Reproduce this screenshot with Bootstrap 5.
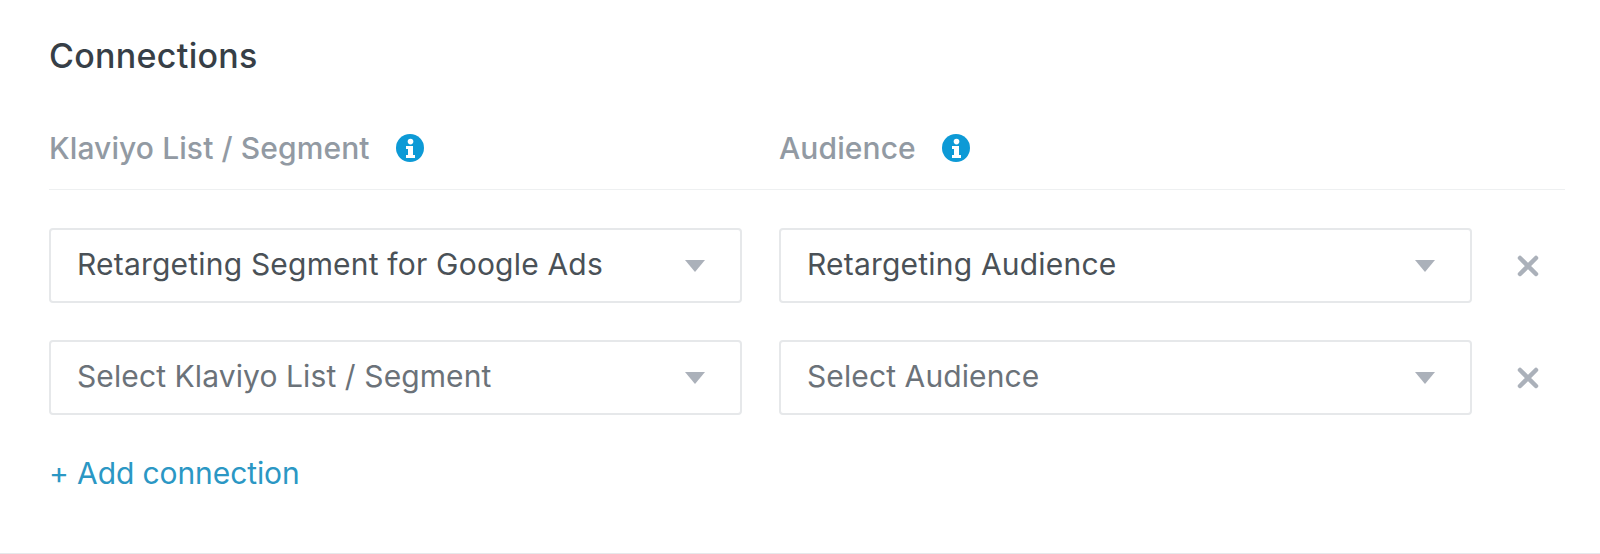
<!DOCTYPE html>
<html>
<head>
    <title>Connections</title>
    <link href="https://cdn.jsdelivr.net/npm/bootstrap@5.3.0/dist/css/bootstrap.min.css" rel="stylesheet">
    <style>
        body {
            font-family: "Inter", "Liberation Sans", sans-serif;
            background: #fff;
            color: #373f47;
        }
        .page {
            height: 554px;
            padding: 36px 35px 0 49px;
            border-bottom: 1px solid #e6e8ea;
            overflow: hidden;
        }
        .title {
            font-size: 34px;
            line-height: 40px;
            font-weight: 500;
            letter-spacing: .3px;
            color: #373f47;
            margin: 0 0 51px;
        }
        .col-left { width: 693px; }
        .col-right { width: 693px; }
        .gutter { gap: 37px; }
        .head-row { height: 40px; }
        .head-label {
            font-size: 30px;
            line-height: 40px;
            font-weight: 500;
            letter-spacing: .1px;
            padding-top: 2px;
            color: #929aa3;
        }
        .info-icon {
            margin-left: 26px;
            margin-top: 2px;
        }
        .head-rule {
            height: 1px;
            background: #eef0f1;
            margin: 22px 0 38px;
        }
        .fake-select {
            height: 75px;
            padding: 0 35px 0 26px;
            border: 2px solid #e6e8ea;
            border-radius: 4px;
            font-size: 30px;
            letter-spacing: .2px;
            color: #4a5157;
        }
        .fake-select.empty { color: #6b7279; letter-spacing: .1px; }
        .fake-select > span:first-child { padding-bottom: 3px; }
        .conn-row { margin-bottom: 37px; }
        .caret-down {
            width: 0;
            height: 0;
            border-left: 10px solid transparent;
            border-right: 10px solid transparent;
            border-top: 12px solid #abb1ba;
        }
        .remove-btn {
            width: 22px;
            height: 22px;
            margin-left: 45px;
        }
        .add-link {
            font-size: 30px;
            line-height: 40px;
            letter-spacing: -.1px;
            color: #2b97c4;
            text-decoration: none;
            display: inline-block;
            margin-top: 1px;
        }
    </style>
</head>
<body>
    <div class="page">
        <h2 class="title">Connections</h2>

        <div class="d-flex gutter head-row">
            <div class="col-left d-flex align-items-center">
                <span class="head-label">Klaviyo List / Segment</span>
                <svg class="info-icon" width="28" height="28" viewBox="0 0 28 28"><circle cx="14" cy="14" r="14" fill="#0d9ad6"/><circle cx="14.5" cy="7.6" r="2.8" fill="#fff"/><path d="M10 12h7v9h2v3h-9v-3h2v-6h-2z" fill="#fff"/></svg>
            </div>
            <div class="col-right d-flex align-items-center">
                <span class="head-label">Audience</span>
                <svg class="info-icon" width="28" height="28" viewBox="0 0 28 28"><circle cx="14" cy="14" r="14" fill="#0d9ad6"/><circle cx="14.5" cy="7.6" r="2.8" fill="#fff"/><path d="M10 12h7v9h2v3h-9v-3h2v-6h-2z" fill="#fff"/></svg>
            </div>
        </div>
        <div class="head-rule"></div>

        <div class="d-flex align-items-center gutter conn-row">
            <div class="col-left fake-select d-flex align-items-center justify-content-between">
                <span>Retargeting Segment for Google Ads</span>
                <span class="caret-down"></span>
            </div>
            <div class="d-flex align-items-center">
                <div class="col-right fake-select d-flex align-items-center justify-content-between">
                    <span>Retargeting Audience</span>
                    <span class="caret-down"></span>
                </div>
                <svg class="remove-btn" viewBox="0 0 22 22"><path d="M3 3l16 16M19 3L3 19" stroke="#abb1ba" stroke-width="4.5" stroke-linecap="round"/></svg>
            </div>
        </div>

        <div class="d-flex align-items-center gutter conn-row">
            <div class="col-left fake-select empty d-flex align-items-center justify-content-between">
                <span>Select Klaviyo List / Segment</span>
                <span class="caret-down"></span>
            </div>
            <div class="d-flex align-items-center">
                <div class="col-right fake-select empty d-flex align-items-center justify-content-between">
                    <span>Select Audience</span>
                    <span class="caret-down"></span>
                </div>
                <svg class="remove-btn" viewBox="0 0 22 22"><path d="M3 3l16 16M19 3L3 19" stroke="#abb1ba" stroke-width="4.5" stroke-linecap="round"/></svg>
            </div>
        </div>

        <a href="#" class="add-link">+ Add connection</a>
    </div>

    <script src="https://cdn.jsdelivr.net/npm/bootstrap@5.3.0/dist/js/bootstrap.bundle.min.js"></script>
</body>
</html>
